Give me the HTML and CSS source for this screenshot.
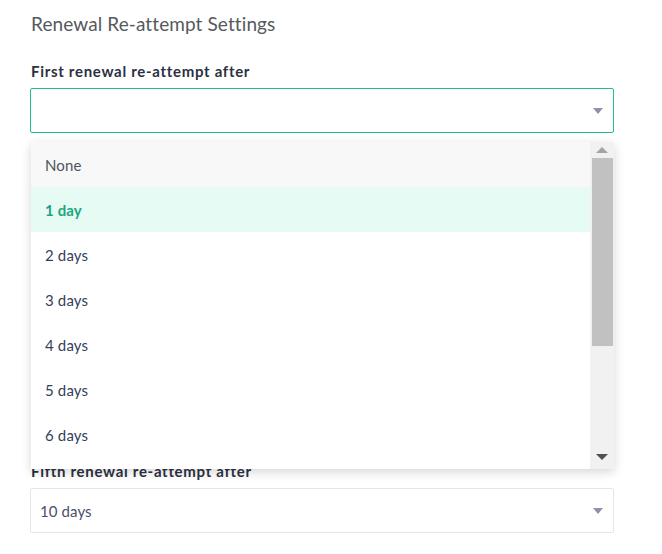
FILE: index.html
```html
<!DOCTYPE html>
<html lang="en">
<head>
<meta charset="utf-8">
<title>Renewal Re-attempt Settings</title>
<link rel="stylesheet" href="styles.css">
</head>
<body>
<div class="page">
  <h2 class="title">Renewal Re-attempt Settings</h2>
  <div class="field">
    <div class="label">First renewal re-attempt after</div>
    <div class="select open">
      <span class="value"></span>
      <span class="caret"></span>
    </div>
    <div class="menu">
      <ul class="options">
        <li class="opt first">None</li>
        <li class="opt active">1 day</li>
        <li class="opt">2 days</li>
        <li class="opt">3 days</li>
        <li class="opt">4 days</li>
        <li class="opt">5 days</li>
        <li class="opt">6 days</li>
        <li class="opt"></li>
      </ul>
      <div class="scrollbar">
        <div class="sb-btn"><span class="sb-up"></span></div>
        <div class="sb-track"><div class="sb-thumb"></div></div>
        <div class="sb-btn bottom"><span class="sb-down"></span></div>
      </div>
    </div>
  </div>
  <div class="field covered">
    <div class="label">Second renewal re-attempt after</div>
    <div class="select"><span class="value">3 days</span><span class="caret"></span></div>
  </div>
  <div class="field covered">
    <div class="label">Third renewal re-attempt after</div>
    <div class="select"><span class="value">5 days</span><span class="caret"></span></div>
  </div>
  <div class="field covered">
    <div class="label">Fourth renewal re-attempt after</div>
    <div class="select"><span class="value">7 days</span><span class="caret"></span></div>
  </div>
  <div class="field">
    <div class="label">Fifth renewal re-attempt after</div>
    <div class="select"><span class="value">10 days</span><span class="caret"></span></div>
  </div>
</div>
</body>
</html>
```
FILE: styles.css
```css
* { box-sizing: border-box; }
html, body { margin: 0; padding: 0; background: #ffffff; }
body {
  font-family: Lato, "Open Sans", "Liberation Sans", sans-serif;
  color: #2f3a4f;
}
.page {
  width: 662px;
  padding: 11px 48px 0 30px;
}
.title {
  margin: 0 0 24px 1px;
  font-size: 19px;
  line-height: 26px;
  font-weight: 400;
  letter-spacing: 0.1px;
  color: #555a60;
}
.field {
  position: relative;
  margin-bottom: 28px;
}
.field.covered { visibility: hidden; }
.label {
  margin-left: 1px;
  font-size: 15px;
  line-height: 20px;
  font-weight: 700;
  letter-spacing: 0.7px;
  color: #2b3142;
  margin-bottom: 7px;
}
.select {
  height: 45px;
  border: 1px solid #e6e6e6;
  border-radius: 2px;
  display: flex;
  align-items: center;
  padding: 0 10px 0 9px;
  font-size: 15px;
  letter-spacing: 0.1px;
  color: #4a5068;
}
.select.open { border-color: #1fbd93; }
.value { flex: 1; }
.caret {
  width: 0; height: 0;
  border-left: 5px solid transparent;
  border-right: 5px solid transparent;
  border-top: 6px solid #8e93aa;
  margin-top: 1px;
}
.menu {
  position: absolute;
  left: 1px;
  right: 0;
  top: 81px;
  height: 327px;
  background: #ffffff;
  box-shadow: 0 3px 10px rgba(0,0,0,0.16);
  display: flex;
  z-index: 10;
  overflow: hidden;
}
.options {
  list-style: none;
  margin: 0;
  padding: 0;
  flex: 1;
}
.opt {
  height: 45px;
  line-height: 47px;
  padding-left: 14px;
  font-size: 15px;
  letter-spacing: 0.15px;
  color: #34405a;
}
.opt.first { background: #f8f8f8; color: #4f5560; }
.opt.active { background: #e6fbf3; color: #1ea57f; font-weight: 700; }
.scrollbar {
  width: 24px;
  background: #f1f1f1;
  display: flex;
  flex-direction: column;
}
.sb-btn {
  height: 16px;
  display: flex;
  justify-content: center;
  align-items: center;
}
.sb-btn.bottom { height: 24px; }
.sb-up {
  width: 0; height: 0;
  border-left: 6px solid transparent;
  border-right: 6px solid transparent;
  border-bottom: 6px solid #a3a3a3;
}
.sb-down {
  width: 0; height: 0;
  border-left: 6px solid transparent;
  border-right: 6px solid transparent;
  border-top: 6px solid #505050;
}
.sb-track {
  flex: 1;
  padding: 0 1px 0 2px;
}
.sb-thumb {
  height: 188px;
  background: #c1c1c1;
}
```
